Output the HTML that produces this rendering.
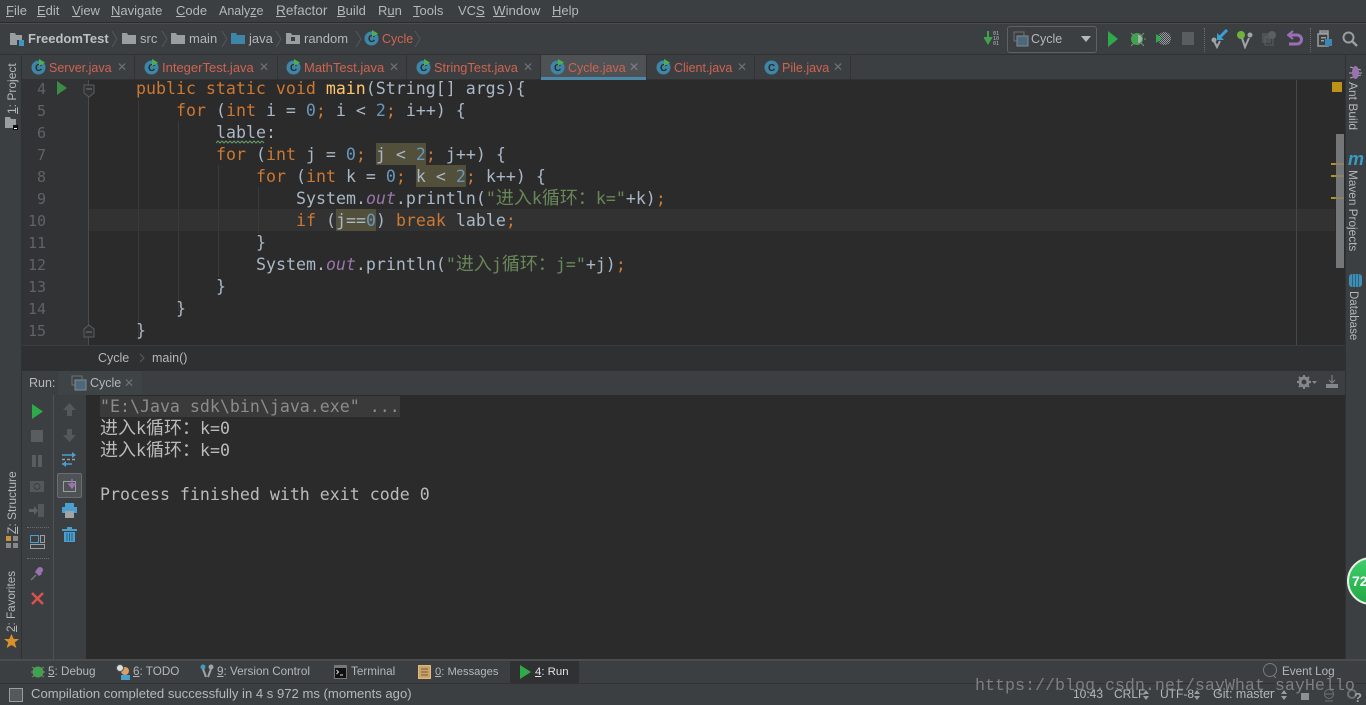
<!DOCTYPE html>
<html><head><meta charset="utf-8">
<style>
html,body{margin:0;padding:0;width:1366px;height:705px;overflow:hidden;background:#3c3f41}
body{position:relative;font-family:"Liberation Sans","Noto Sans CJK SC",sans-serif;font-size:13px;color:#b4b8ba}
.a,.t,.r,svg{position:absolute}
.t{white-space:pre;line-height:16px}
.r{display:block}
u{text-decoration:underline;text-underline-offset:1px}
.red{color:#cf6350}
.code{position:absolute;white-space:pre;font-family:"DejaVu Sans Mono",monospace;font-size:16.6px;line-height:24px;color:#a9b7c6;height:22px}
.code b,.con b{font-weight:normal;font-family:"WenQuanYi Zen Hei","Noto Sans CJK SC",sans-serif;font-size:18px;line-height:0}
.k{color:#cc7832}.n{color:#6897bb}.s{color:#6a8759}.o{color:#9876aa;font-style:italic}
.h{background:#52503a;display:inline-block;height:22px}
.ln{position:absolute;left:0;width:24px;text-align:right;font-family:"DejaVu Sans Mono",monospace;font-size:15px;line-height:24px;color:#606366}
.con{position:absolute;left:100px;white-space:pre;font-family:"DejaVu Sans Mono",monospace;font-size:16.6px;line-height:24px;color:#bbbbbb}
.v{position:absolute;white-space:pre;line-height:14px;transform-origin:0 0;font-size:12px;color:#b4b8ba}
.vl{transform:rotate(-90deg)}
.vr{transform:rotate(90deg)}
.x{position:absolute;font-size:12px;color:#6f7274;line-height:14px}
.m{top:3px}
.tabt{top:60px}
.bt{font-size:11.7px;top:664px}
</style></head><body>

<!-- top bars -->
<div class="r" style="left:0;top:22px;width:1366px;height:1px;background:#2b2b2b"></div>
<div class="r" style="left:0;top:23px;width:1366px;height:1px;background:#4a4c4e"></div>
<div class="r" style="left:0;top:54px;width:1366px;height:1px;background:#323232"></div>
<div class="t m" style="left:6px"><u>F</u>ile</div>
<div class="t m" style="left:37px"><u>E</u>dit</div>
<div class="t m" style="left:72px"><u>V</u>iew</div>
<div class="t m" style="left:111px"><u>N</u>avigate</div>
<div class="t m" style="left:176px"><u>C</u>ode</div>
<div class="t m" style="left:219px;font-size:12.5px">Analy<u>z</u>e</div>
<div class="t m" style="left:276px;font-size:13.6px"><u>R</u>efactor</div>
<div class="t m" style="left:337px"><u>B</u>uild</div>
<div class="t m" style="left:378px">R<u>u</u>n</div>
<div class="t m" style="left:413px"><u>T</u>ools</div>
<div class="t m" style="left:458px">VC<u>S</u></div>
<div class="t m" style="left:493px;font-size:13.3px"><u>W</u>indow</div>
<div class="t m" style="left:552px"><u>H</u>elp</div>

<!-- nav bar -->
<svg style="left:9px;top:31px" width="16" height="16"><path d="M1 2h5l1 2h6v5H8v5H1z" fill="#9a9ea1"/><rect x="10" y="9" width="5" height="6" fill="#3b9ac4"/></svg>
<div class="t" style="left:28px;top:31px;font-weight:bold;color:#bcc0c2">FreedomTest</div>
<svg style="left:111px;top:29px" width="8" height="20"><path d="M1 2l5 8-5 8" stroke="#55585a" fill="none"/></svg>
<svg style="left:122px;top:31px" width="15" height="14"><path d="M0 2h5l1 2h8v9H0z" fill="#9a9ea1"/></svg>
<div class="t" style="left:140px;top:31px">src</div>
<svg style="left:161px;top:29px" width="8" height="20"><path d="M1 2l5 8-5 8" stroke="#55585a" fill="none"/></svg>
<svg style="left:171px;top:31px" width="15" height="14"><path d="M0 2h5l1 2h8v9H0z" fill="#9a9ea1"/></svg>
<div class="t" style="left:189px;top:31px">main</div>
<svg style="left:221px;top:29px" width="8" height="20"><path d="M1 2l5 8-5 8" stroke="#55585a" fill="none"/></svg>
<svg style="left:231px;top:31px" width="15" height="14"><path d="M0 2h5l1 2h8v9H0z" fill="#3d86a8"/></svg>
<div class="t" style="left:249px;top:31px">java</div>
<svg style="left:275px;top:29px" width="8" height="20"><path d="M1 2l5 8-5 8" stroke="#55585a" fill="none"/></svg>
<svg style="left:286px;top:31px" width="15" height="14"><path d="M0 2h5l1 2h8v9H0z" fill="#9a9ea1"/><rect x="5" y="6" width="4" height="4" fill="#3c3f41"/></svg>
<div class="t" style="left:304px;top:31px">random</div>
<svg style="left:355px;top:29px" width="8" height="20"><path d="M1 2l5 8-5 8" stroke="#55585a" fill="none"/></svg>
<svg style="left:364px;top:30px" width="16" height="16"><circle cx="7.5" cy="8.5" r="7" fill="#3d86a8"/><text x="4" y="12" font-size="10" font-weight="bold" fill="#2b2b2b" font-family="Liberation Sans">C</text><path d="M8 0l6 3.500-6 3.500z" fill="#4caf50"/></svg>
<div class="t red" style="left:382px;top:31px;font-size:12.5px">Cycle</div>
<svg style="left:414px;top:29px" width="8" height="20"><path d="M1 2l5 8-5 8" stroke="#55585a" fill="none"/></svg>

<!-- toolbar right -->
<svg style="left:984px;top:30px" width="18" height="16"><path d="M4 1v8M1 8l3 5 3-5z" stroke="#3fa24c" stroke-width="2" fill="#3fa24c"/><text x="9" y="5" font-size="5" fill="#b4b8ba" font-family="DejaVu Sans Mono">01</text><text x="9" y="10" font-size="5" fill="#b4b8ba" font-family="DejaVu Sans Mono">10</text><text x="9" y="15" font-size="5" fill="#b4b8ba" font-family="DejaVu Sans Mono">01</text></svg>
<div class="r" style="left:1007px;top:26px;width:90px;height:27px;border:1px solid #5d6163;border-radius:3px;box-sizing:border-box"></div>
<svg style="left:1013px;top:31px" width="16" height="16"><rect x="1" y="1" width="10" height="9" fill="none" stroke="#6e7173"/><rect x="4" y="5" width="11" height="10" fill="#4d6878" stroke="#7d8c95"/></svg>
<div class="t" style="left:1031px;top:31px;font-size:12.5px">Cycle</div>
<svg style="left:1081px;top:36px" width="11" height="7"><path d="M0 0h10L5 6z" fill="#b4b8ba"/></svg>
<svg style="left:1107px;top:31px" width="12" height="16"><path d="M1 0l10 8L1 16z" fill="#2eaa4a"/></svg>
<svg style="left:1130px;top:30px" width="16" height="17"><ellipse cx="7" cy="9" rx="6" ry="6" fill="#3fa24c"/><path d="M8 5a4 4 0 0 1 0 8z" fill="#a9adaf"/><path d="M1 3l3 3M14 3l-3 3M14 9h2M1 16l3-3M14 16l-3-3" stroke="#7c8c7e"/></svg>
<svg style="left:1156px;top:31px" width="15" height="15"><defs><pattern id="ck" width="2" height="2" patternUnits="userSpaceOnUse"><rect width="1" height="1" fill="#9a9ea1"/><rect x="1" y="1" width="1" height="1" fill="#9a9ea1"/></pattern></defs><circle cx="8.500" cy="7.500" r="6.500" fill="url(#ck)"/><path d="M0 3l6 4.500-6 4.500z" fill="#2eaa4a"/></svg>
<div class="r" style="left:1182px;top:32px;width:12px;height:13px;background:#5a5d5f"></div>
<div class="r" style="left:1204px;top:28px;height:24px;border-left:1px dotted #6a6d6f"></div>
<svg style="left:1211px;top:29px" width="18" height="20"><path d="M16 1l-7 7" stroke="#3a9fd6" stroke-width="3"/><path d="M6 4v7h7z" fill="#3a9fd6"/><circle cx="3" cy="11" r="2.500" fill="#a0a4a6"/><path d="M3 12l3 6 3-6" stroke="#a0a4a6" stroke-width="2" fill="none"/></svg>
<svg style="left:1236px;top:29px" width="18" height="20"><circle cx="5" cy="6" r="4" fill="#6fb33a"/><circle cx="14" cy="6" r="2.500" fill="#a0a4a6"/><path d="M6 9l3 9 4-9" stroke="#a0a4a6" stroke-width="2" fill="none"/></svg>
<svg style="left:1261px;top:30px" width="16" height="16"><rect x="1" y="3" width="9" height="10" fill="#4f5254"/><rect x="4" y="7" width="8" height="8" fill="none" stroke="#5c5f61"/><circle cx="11" cy="5" r="4" fill="#5c5f61"/></svg>
<svg style="left:1287px;top:30px" width="16" height="17"><path d="M6 1L1 5l5 4" fill="none" stroke="#9b6fb8" stroke-width="2"/><path d="M2 5h8a4 4 0 0 1 0 9H2" fill="none" stroke="#9b6fb8" stroke-width="3"/></svg>
<div class="r" style="left:1310px;top:28px;height:24px;border-left:1px dotted #6a6d6f"></div>
<svg style="left:1317px;top:30px" width="16" height="17"><path d="M3 1h8v2H3zM1 4h10v12H1z" fill="none" stroke="#9a9ea1" stroke-width="1.500"/><rect x="4" y="7" width="5" height="1.500" fill="#9a9ea1"/><rect x="4" y="10" width="3" height="1.500" fill="#9a9ea1"/><rect x="8" y="9" width="7" height="7" fill="#3b86b4"/></svg>
<svg style="left:1342px;top:31px" width="16" height="16"><circle cx="6.500" cy="6.500" r="5" fill="none" stroke="#9a9ea1" stroke-width="2"/><path d="M10 10l5 5" stroke="#9a9ea1" stroke-width="2.500"/></svg>

<!-- left strip -->
<div class="r" style="left:21px;top:55px;width:1px;height:605px;background:#2f3133"></div>
<div class="v vl" style="left:5px;top:114px"><u>1</u>: Project</div>
<svg style="left:5px;top:117px" width="14" height="14"><path d="M0 0h5l1 2h5v9H0z" fill="#9a9ea1"/><rect x="8" y="8" width="5" height="5" fill="#111"/><rect x="9" y="11" width="3" height="1" fill="#fff"/></svg>
<div class="v vl" style="left:5px;top:534px"><u>Z</u>: Structure</div>
<svg style="left:5px;top:535px" width="14" height="14"><rect x="1" y="1" width="5" height="5" fill="#c9913c"/><rect x="8" y="1" width="5" height="5" fill="#888"/><rect x="1" y="8" width="5" height="5" fill="#888"/><rect x="8" y="8" width="5" height="5" fill="#888"/></svg>
<div class="v vl" style="left:5px;top:632px;font-size:11.7px"><u>2</u>: Favorites</div>
<svg style="left:4px;top:634px" width="15" height="15"><path d="M7.500 0l2.200 5h5.300l-4.200 3.400 1.600 5.600-4.900-3-4.900 3 1.600-5.600L0 5h5.300z" fill="#d8912c"/></svg>

<!-- right strip -->
<div class="r" style="left:1345px;top:55px;width:1px;height:605px;background:#2f3133"></div>
<svg style="left:1349px;top:65px" width="13" height="15"><path d="M1 2l11 3M0 8h13M1 13l11-3" stroke="#a9adaf"/><ellipse cx="6.500" cy="7.500" rx="3.500" ry="6.500" fill="#9b72b0"/></svg>
<div class="v vr" style="left:1360px;top:82px">Ant Build</div>
<div class="t" style="left:1348px;top:151px;color:#3b9ac4;font-weight:bold;font-style:italic;font-size:18px;font-family:'Liberation Sans'">m</div>
<div class="v vr" style="left:1360px;top:170px;font-size:11.8px">Maven Projects</div>
<svg style="left:1349px;top:274px" width="14" height="14"><rect x="0" y="0" width="13" height="13" rx="3" fill="#3d8fb5"/><path d="M3.500 0v13M6.500 0v13M9.500 0v13" stroke="#2d5f78"/></svg>
<div class="v vr" style="left:1360px;top:291px;font-size:11.5px">Database</div>

<!-- tabs -->
<div class="r" style="left:22px;top:55px;width:1323px;height:25px;background:#3c3f41"></div>
<div class="r" style="left:22px;top:79px;width:1323px;height:1px;background:#323232"></div>
<div class="r" style="left:541px;top:55px;width:105px;height:25px;background:#4e5254"></div>
<div class="r" style="left:541px;top:77px;width:105px;height:3px;background:#4a88a8"></div>
<div class="r" style="left:134px;top:55px;width:1px;height:25px;background:#323232"></div>
<div class="r" style="left:277px;top:55px;width:1px;height:25px;background:#323232"></div>
<div class="r" style="left:406px;top:55px;width:1px;height:25px;background:#323232"></div>
<div class="r" style="left:540px;top:55px;width:1px;height:25px;background:#323232"></div>
<div class="r" style="left:646px;top:55px;width:1px;height:25px;background:#323232"></div>
<div class="r" style="left:754px;top:55px;width:1px;height:25px;background:#323232"></div>
<div class="r" style="left:850px;top:55px;width:1px;height:25px;background:#323232"></div>

<svg style="left:31px;top:59px" width="16" height="16"><circle cx="7.500" cy="8.500" r="7" fill="#3d86a8"/><text x="4" y="12" font-size="10" font-weight="bold" fill="#2b2b2b" font-family="Liberation Sans">C</text><path d="M8 0l6 3.500-6 3.500z" fill="#4caf50"/></svg>
<div class="t red tabt" style="left:49px;font-size:12.5px">Server.java</div><div class="x" style="left:117px;top:60px">✕</div>
<svg style="left:144px;top:59px" width="16" height="16"><circle cx="7.500" cy="8.500" r="7" fill="#3d86a8"/><text x="4" y="12" font-size="10" font-weight="bold" fill="#2b2b2b" font-family="Liberation Sans">C</text><path d="M8 0l6 3.500-6 3.500z" fill="#4caf50"/></svg>
<div class="t red tabt" style="left:162px">IntegerTest.java</div><div class="x" style="left:259px;top:60px">✕</div>
<svg style="left:286px;top:59px" width="16" height="16"><circle cx="7.500" cy="8.500" r="7" fill="#3d86a8"/><text x="4" y="12" font-size="10" font-weight="bold" fill="#2b2b2b" font-family="Liberation Sans">C</text><path d="M8 0l6 3.500-6 3.500z" fill="#4caf50"/></svg>
<div class="t red tabt" style="left:304px">MathTest.java</div><div class="x" style="left:389px;top:60px">✕</div>
<svg style="left:416px;top:59px" width="16" height="16"><circle cx="7.500" cy="8.500" r="7" fill="#3d86a8"/><text x="4" y="12" font-size="10" font-weight="bold" fill="#2b2b2b" font-family="Liberation Sans">C</text><path d="M8 0l6 3.500-6 3.500z" fill="#4caf50"/></svg>
<div class="t red tabt" style="left:434px;font-size:12.8px">StringTest.java</div><div class="x" style="left:523px;top:60px">✕</div>
<svg style="left:550px;top:59px" width="16" height="16"><circle cx="7.500" cy="8.500" r="7" fill="#3d86a8"/><text x="4" y="12" font-size="10" font-weight="bold" fill="#2b2b2b" font-family="Liberation Sans">C</text><path d="M8 0l6 3.500-6 3.500z" fill="#4caf50"/></svg>
<div class="t red tabt" style="left:568px;font-size:12.5px">Cycle.java</div><div class="x" style="left:629px;top:60px;color:#7d8082">✕</div>
<svg style="left:656px;top:59px" width="16" height="16"><circle cx="7.500" cy="8.500" r="7" fill="#3d86a8"/><text x="4" y="12" font-size="10" font-weight="bold" fill="#2b2b2b" font-family="Liberation Sans">C</text><path d="M8 0l6 3.500-6 3.500z" fill="#4caf50"/></svg>
<div class="t red tabt" style="left:674px;font-size:12.5px">Client.java</div><div class="x" style="left:737px;top:60px">✕</div>
<svg style="left:764px;top:59px" width="16" height="16"><circle cx="7.500" cy="8.500" r="7" fill="#3d86a8"/><text x="4" y="12" font-size="10" font-weight="bold" fill="#2b2b2b" font-family="Liberation Sans">C</text></svg>
<div class="t red tabt" style="left:782px;font-size:12.5px">Pile.java</div><div class="x" style="left:833px;top:60px">✕</div>

<!-- editor -->
<div class="a" style="left:22px;top:80px;width:1323px;height:266px;background:#2b2b2b;overflow:hidden">
  <div class="r" style="left:0;top:0;width:66px;height:266px;background:#313335"></div>
  <div class="r" style="left:66px;top:129px;width:1257px;height:22px;background:#323232"></div>
  <div class="r" style="left:66px;top:0;width:1px;height:266px;background:#4a4c4e"></div>
  <div class="r" style="left:1274px;top:0;width:1px;height:266px;background:#464849"></div>
  <div class="r" style="left:116px;top:20px;width:1px;height:240px;background:#3b3b3b"></div>
  <div class="r" style="left:156px;top:41px;width:1px;height:190px;background:#3b3b3b"></div>
  <div class="r" style="left:196px;top:85px;width:1px;height:112px;background:#3b3b3b"></div>
  <div class="r" style="left:236px;top:107px;width:1px;height:46px;background:#3b3b3b"></div>

  <div class="ln" style="top:-3px">4</div>
  <div class="ln" style="top:19px">5</div>
  <div class="ln" style="top:41px">6</div>
  <div class="ln" style="top:63px">7</div>
  <div class="ln" style="top:85px">8</div>
  <div class="ln" style="top:107px">9</div>
  <div class="ln" style="top:129px">10</div>
  <div class="ln" style="top:151px">11</div>
  <div class="ln" style="top:173px">12</div>
  <div class="ln" style="top:195px">13</div>
  <div class="ln" style="top:217px">14</div>
  <div class="ln" style="top:239px">15</div>

  <svg style="left:34px;top:1px" width="12" height="14"><path d="M1 0l10 7-10 7z" fill="#3c8a45"/></svg>
  <svg style="left:61px;top:4px" width="12" height="14"><path d="M1 1h10v8l-5 4-5-4z" fill="#313335" stroke="#5a5d5f"/><path d="M3 5h6" stroke="#777"/></svg>
  <svg style="left:61px;top:244px" width="12" height="14"><path d="M1 13h10V5L6 1 1 5z" fill="#313335" stroke="#5a5d5f"/><path d="M3 8h6" stroke="#777"/></svg>

  <div class="code" style="top:-3px;left:114px"><span class="k">public static void</span> <span style="color:#ffc66d">main</span>(String[] args){</div>
  <div class="code" style="top:19px;left:154px"><span class="k">for</span> (<span class="k">int</span> i = <span class="n">0</span><span class="k">;</span> i &lt; <span class="n">2</span><span class="k">;</span> i++) {</div>
  <div class="code" style="top:41px;left:194px">lable:</div>
  <svg style="left:194px;top:60px" width="50" height="4"><path d="M0 3l2-2 2 2 2-2 2 2 2-2 2 2 2-2 2 2 2-2 2 2 2-2 2 2 2-2 2 2 2-2 2 2 2-2 2 2 2-2 2 2 2-2 2 2 2-2 2 2" fill="none" stroke="#659c6b"/></svg>
  <div class="code" style="top:63px;left:194px"><span class="k">for</span> (<span class="k">int</span> j = <span class="n">0</span><span class="k">;</span> <span class="h">j &lt; <span class="n">2</span></span><span class="k">;</span> j++) {</div>
  <div class="code" style="top:85px;left:234px"><span class="k">for</span> (<span class="k">int</span> k = <span class="n">0</span><span class="k">;</span> <span class="h">k &lt; <span class="n">2</span></span><span class="k">;</span> k++) {</div>
  <div class="code" style="top:107px;left:274px">System.<span class="o">out</span>.println(<span class="s">"<b>进入</b>k<b>循环：</b>k="</span>+k)<span class="k">;</span></div>
  <div class="code" style="top:129px;left:274px"><span class="k">if</span> (<span class="h">j==<span class="n">0</span></span>) <span class="k">break</span> lable<span class="k">;</span></div>
  <div class="code" style="top:151px;left:234px">}</div>
  <div class="code" style="top:173px;left:234px">System.<span class="o">out</span>.println(<span class="s">"<b>进入</b>j<b>循环：</b>j="</span>+j)<span class="k">;</span></div>
  <div class="code" style="top:195px;left:194px">}</div>
  <div class="code" style="top:217px;left:154px">}</div>
  <div class="code" style="top:239px;left:114px">}</div>

  <div class="r" style="left:1310px;top:2px;width:10px;height:10px;background:#be9117"></div>
  <div class="r" style="left:1313px;top:53px;width:8px;height:134px;background:#747677;border:1px solid #2b2b2b;box-sizing:content-box"></div>
  <div class="r" style="left:1309px;top:83px;width:4px;height:2px;background:#be9117"></div>
  <div class="r" style="left:1313px;top:83px;width:9px;height:2px;background:#8c8468"></div>
  <div class="r" style="left:1309px;top:95px;width:4px;height:2px;background:#be9117"></div>
  <div class="r" style="left:1313px;top:95px;width:9px;height:2px;background:#8c8468"></div>
  <div class="r" style="left:1309px;top:117px;width:4px;height:2px;background:#be9117"></div>
  <div class="r" style="left:1313px;top:117px;width:9px;height:2px;background:#8c8468"></div>
</div>

<!-- breadcrumb -->
<div class="r" style="left:22px;top:345px;width:1323px;height:1px;background:#3c3c3c"></div>
<div class="r" style="left:22px;top:346px;width:1323px;height:25px;background:#2f3031"></div>
<div class="t" style="left:98px;top:350px;font-size:12.5px">Cycle</div>
<svg style="left:139px;top:353px" width="6" height="10"><path d="M1 1l4 4-4 4" stroke="#5a5d5f" fill="none"/></svg>
<div class="t" style="left:152px;top:350px;font-size:12.5px">main()</div>

<!-- run header -->
<div class="r" style="left:22px;top:371px;width:1323px;height:24px;background:#3c3f41"></div>
<div class="r" style="left:58px;top:371px;width:84px;height:24px;background:#3e4345"></div>
<div class="t" style="left:29px;top:375px;font-size:12.5px">Run:</div>
<svg style="left:71px;top:375px" width="16" height="16"><rect x="1" y="1" width="10" height="9" fill="none" stroke="#6e7173"/><rect x="4" y="5" width="11" height="10" fill="#4d6878" stroke="#7d8c95"/></svg>
<div class="t" style="left:90px;top:375px;font-size:12.5px">Cycle</div>
<div class="x" style="left:124px;top:376px">✕</div>
<svg style="left:1297px;top:375px" width="20" height="14"><circle cx="7" cy="7" r="4" fill="none" stroke="#85888a" stroke-width="3"/><path d="M7 0v2M7 12v2M0 7h2M12 7h2M2 2l1.500 1.500M12 2l-1.500 1.500M2 12l1.500-1.500M12 12l-1.500-1.500" stroke="#85888a" stroke-width="2"/><path d="M15 6h5l-2.500 3z" fill="#85888a"/></svg>
<svg style="left:1325px;top:375px" width="14" height="14"><path d="M7 0v7M4 5l3 3 3-3" stroke="#85888a" fill="none"/><rect x="1" y="9" width="12" height="4" fill="#85888a"/></svg>

<!-- run side toolbars -->
<div class="r" style="left:53px;top:395px;width:1px;height:264px;background:#4f5254"></div>
<svg style="left:31px;top:404px" width="13" height="15"><path d="M1 0l11 7.500L1 15z" fill="#2eaa4a"/></svg>
<div class="r" style="left:31px;top:430px;width:12px;height:12px;background:#5a5d5f"></div>
<svg style="left:31px;top:455px" width="12" height="12"><rect x="1" y="0" width="4" height="12" fill="#5a5d5f"/><rect x="7" y="0" width="4" height="12" fill="#5a5d5f"/></svg>
<svg style="left:30px;top:479px" width="14" height="13"><rect x="0" y="2" width="14" height="11" fill="#55585a"/><circle cx="7" cy="7.500" r="3" fill="none" stroke="#3c3f41"/></svg>
<svg style="left:29px;top:503px" width="16" height="15"><path d="M9 1h6v13H9z" fill="#55585a"/><path d="M0 6h5V3l4 4.500L5 12V9H0z" fill="#5f6264"/></svg>
<div class="r" style="left:27px;top:527px;width:22px;border-top:1px dotted #6a6d6f"></div>
<svg style="left:30px;top:534px" width="15" height="16"><rect x="0.500" y="1.500" width="8" height="7" fill="none" stroke="#4a9fd0"/><rect x="10.500" y="1.500" width="4" height="7" fill="none" stroke="#9a9ea1"/><rect x="0.500" y="10.500" width="14" height="4" fill="none" stroke="#9a9ea1"/></svg>
<div class="r" style="left:27px;top:558px;width:22px;border-top:1px dotted #6a6d6f"></div>
<svg style="left:30px;top:566px" width="15" height="16"><path d="M7 3l5 5-3 2-4-4z" fill="#9b72b0"/><circle cx="10" cy="4" r="3" fill="#9b72b0"/><path d="M6 9l-5 5" stroke="#777" stroke-width="1.500"/></svg>
<svg style="left:31px;top:592px" width="13" height="13"><path d="M1 1l11 11M12 1L1 12" stroke="#d9534f" stroke-width="2.500"/></svg>

<svg style="left:63px;top:403px" width="13" height="14"><path d="M6.500 0L13 7H9v6H4V7H0z" fill="#55585a"/></svg>
<svg style="left:63px;top:428px" width="13" height="14"><path d="M6.500 14L13 7H9V1H4v6H0z" fill="#55585a"/></svg>
<svg style="left:61px;top:452px" width="16" height="15"><path d="M1 3h10M1 12h10" stroke="#4a9fd0" stroke-width="1.500" fill="none"/><path d="M1 7.500h13" stroke="#9a9ea1" stroke-width="1.500" stroke-dasharray="3 2"/><path d="M11 0l4 3-4 3zM5 9l-4 3 4 3z" fill="#4a9fd0"/></svg>
<div class="r" style="left:57px;top:473px;width:25px;height:25px;background:#4e5254;border:1px solid #6b6e70;border-radius:2px;box-sizing:border-box"></div>
<svg style="left:62px;top:479px" width="16" height="14"><rect x="1.500" y="2.500" width="12" height="10" fill="none" stroke="#9a9ea1"/><path d="M10 0v6M7 5l3 4 3-4z" stroke="#9b72b0" stroke-width="1.500" fill="#9b72b0"/></svg>
<svg style="left:62px;top:503px" width="15" height="15"><rect x="3" y="0" width="9" height="4" fill="#4a9fd0"/><rect x="0" y="4" width="15" height="6" fill="#4a9fd0"/><rect x="3" y="8" width="9" height="7" fill="#a0a4a6"/></svg>
<svg style="left:62px;top:527px" width="15" height="15"><rect x="0" y="2" width="15" height="2" fill="#4a9fd0"/><rect x="5" y="0" width="5" height="2" fill="#4a9fd0"/><path d="M2 5h11v10H2z" fill="#4a9fd0"/><path d="M5 6v8M7.500 6v8M10 6v8" stroke="#2d5f78"/></svg>

<!-- console -->
<div class="a" style="left:86px;top:395px;width:1259px;height:264px;background:#2b2b2b"></div>
<div class="r" style="left:100px;top:396px;width:300px;height:21px;background:#3a3a3a"></div>
<div class="con" style="top:395px;color:#8c8c8c">"E:\Java sdk\bin\java.exe" ...</div>
<div class="con" style="top:417px"><b>进入</b>k<b>循环：</b>k=0</div>
<div class="con" style="top:439px"><b>进入</b>k<b>循环：</b>k=0</div>
<div class="con" style="top:483px">Process finished with exit code 0</div>

<!-- bubble -->
<div class="a" style="left:1347px;top:557px;width:19px;height:48px;overflow:hidden">
  <div style="width:44px;height:44px;border-radius:50%;background:linear-gradient(#3fcf6a,#22a845);border:2px solid #e8efe8;box-sizing:content-box;position:absolute;left:0;top:0"></div>
  <div style="position:absolute;left:5px;top:17px;color:#fff;font-weight:bold;font-size:14px;line-height:14px">72</div>
</div>

<!-- bottom tool bar -->
<div class="r" style="left:0;top:659px;width:1366px;height:2px;background:#4a4c4e"></div>
<div class="r" style="left:0;top:683px;width:1366px;height:1px;background:#323232"></div>
<div class="r" style="left:510px;top:661px;width:69px;height:22px;background:#2f3133"></div>
<svg style="left:31px;top:664px" width="15" height="15"><ellipse cx="7" cy="8" rx="5.500" ry="5.500" fill="#3fa24c"/><path d="M1 3l3 2M13 3l-3 2M0 8h3M14 8h-3M1 13l3-2M13 13l-3-2" stroke="#7c8c7e"/></svg>
<div class="t bt" style="left:48px"><u>5</u>: Debug</div>
<svg style="left:116px;top:664px" width="16" height="16"><circle cx="9" cy="7" r="4" fill="#d9a066"/><rect x="5" y="11" width="9" height="5" fill="#4a9fd0"/><circle cx="4" cy="4" r="3.500" fill="#dde0e2" stroke="#555"/></svg>
<div class="t bt" style="left:133px"><u>6</u>: TODO</div>
<svg style="left:200px;top:664px" width="14" height="16"><circle cx="3" cy="3" r="2.500" fill="#3d9cc4"/><circle cx="11" cy="3" r="2.500" fill="#a0a4a6"/><path d="M3 5l3 8M11 5l-3 8" stroke="#a0a4a6" stroke-width="2"/></svg>
<div class="t bt" style="left:217px"><u>9</u>: Version Control</div>
<svg style="left:334px;top:665px" width="13" height="14"><rect x="0" y="0" width="13" height="14" fill="#777"/><rect x="1" y="3" width="11" height="10" fill="#111"/><path d="M2.500 5l2 2-2 2M6 10h3" stroke="#ddd" fill="none"/></svg>
<div class="t bt" style="left:351px">Terminal</div>
<svg style="left:418px;top:665px" width="13" height="14"><rect x="0.500" y="0.500" width="12" height="13" fill="#c9a36a" stroke="#e0b97e"/><path d="M3 4h7M3 7h7M3 10h7" stroke="#7a5d30"/></svg>
<div class="t bt" style="left:435px;font-size:11.2px"><u>0</u>: Messages</div>
<svg style="left:520px;top:665px" width="12" height="14"><path d="M0 0l11 7-11 7z" fill="#2eaa4a"/></svg>
<div class="t bt" style="left:535px;color:#e0e3e5;font-size:11.4px"><u>4</u>: Run</div>
<svg style="left:1262px;top:663px" width="16" height="16"><circle cx="8" cy="7" r="6.500" fill="none" stroke="#777a7c"/><path d="M11 12l3 3" stroke="#777a7c"/></svg>
<div class="t bt" style="left:1282px">Event Log</div>

<!-- status bar -->
<div class="r" style="left:9px;top:688px;width:12px;height:12px;background:#55585a;border:1px solid #9a9ea1"></div>
<div class="t" style="left:31px;top:686px;font-size:13.1px">Compilation completed successfully in 4 s 972 ms (moments ago)</div>
<div class="t" style="left:1073px;top:686px;font-size:12px">10:43</div>
<div class="t" style="left:1114px;top:686px;font-size:12px">CRLF</div>
<div class="t" style="left:1160px;top:686px;font-size:12px">UTF-8</div>
<div class="t" style="left:1213px;top:686px;font-size:12.5px">Git: master</div>
<svg style="left:1143px;top:690px" width="7" height="10"><path d="M0 4l3-4 3 4zM0 6l3 4 3-4z" fill="#9a9ea1"/></svg>
<svg style="left:1194px;top:690px" width="7" height="10"><path d="M0 4l3-4 3 4zM0 6l3 4 3-4z" fill="#9a9ea1"/></svg>
<svg style="left:1281px;top:690px" width="7" height="10"><path d="M0 4l3-4 3 4zM0 6l3 4 3-4z" fill="#9a9ea1"/></svg>
<svg style="left:1300px;top:691px" width="10" height="9"><rect x="1" y="2" width="8" height="7" fill="#8e9194"/></svg>
<svg style="left:1322px;top:688px" width="14" height="14"><circle cx="7" cy="6" r="4.500" fill="none" stroke="#6e7173"/><path d="M2 6h10M3 13h8" stroke="#6e7173"/></svg>
<svg style="left:1346px;top:688px" width="12" height="13"><circle cx="6" cy="6" r="4" fill="none" stroke="#6e7173" stroke-width="2"/></svg>
<div class="t" style="left:1354px;top:690px;font-weight:bold;color:#a0a4a6">?</div>

<!-- watermark -->
<div class="t" style="left:975px;top:678px;font-family:'Liberation Mono',monospace;font-size:16.67px;line-height:18px;color:rgba(170,170,170,.6)">https://blog.csdn.net/sayWhat_sayHello</div>

</body></html>
